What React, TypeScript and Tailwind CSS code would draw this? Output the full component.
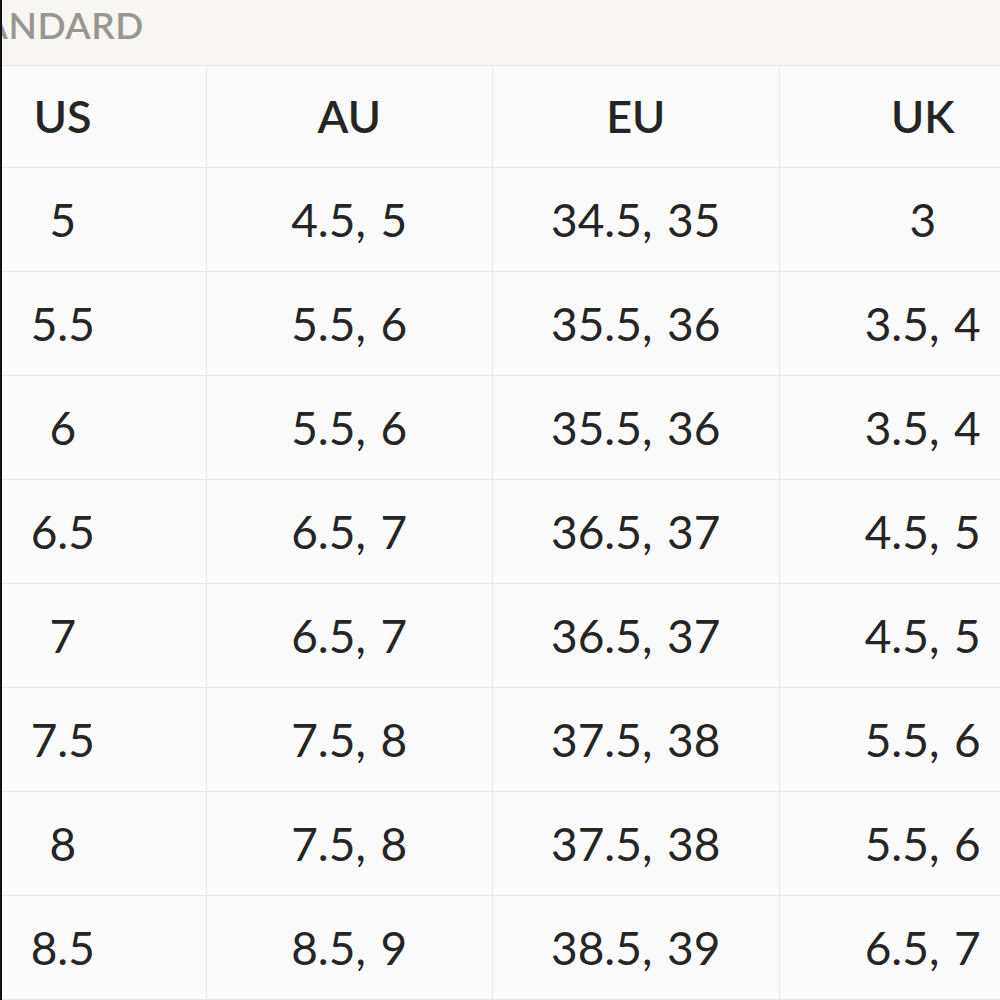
const header = ['US', 'AU', 'EU', 'UK']

const rows: string[][] = [
  ['5', '4.5, 5', '34.5, 35', '3'],
  ['5.5', '5.5, 6', '35.5, 36', '3.5, 4'],
  ['6', '5.5, 6', '35.5, 36', '3.5, 4'],
  ['6.5', '6.5, 7', '36.5, 37', '4.5, 5'],
  ['7', '6.5, 7', '36.5, 37', '4.5, 5'],
  ['7.5', '7.5, 8', '37.5, 38', '5.5, 6'],
  ['8', '7.5, 8', '37.5, 38', '5.5, 6'],
  ['8.5', '8.5, 9', '38.5, 39', '6.5, 7'],
]

export default function App() {
  return (
    <div
      className="w-[1000px] h-[1000px] overflow-hidden bg-[#fbfbfb] border-l-2 border-[#111]"
      style={{ fontFamily: 'Lato, "Liberation Sans", sans-serif' }}
    >
      {/* title band, text runs off the left edge */}
      <div className="h-[66px] bg-[#f7f6f3] border-b border-[#e9e7e4] -ml-[60px] pt-[2px]">
        <span className="text-[37px] leading-[46px] tracking-[0.5px] text-[#999690] font-semibold">
          STANDARD
        </span>
      </div>

      <div className="-ml-[82px] w-[1146px]">
        <div className="grid grid-cols-4 h-[102px] border-b border-[#e8e6e6]">
          {header.map((h, i) => (
            <div
              key={h}
              className={`flex items-center justify-center text-[45px] font-semibold text-[#252525] ${
                i < 3 ? 'border-r border-[#e8e6e6]' : ''
              }`}
            >
              {h}
            </div>
          ))}
        </div>
        {rows.map((r, ri) => (
          <div key={ri} className="grid grid-cols-4 h-[104px] border-b border-[#e8e6e6]">
            {r.map((c, ci) => (
              <div
                key={ci}
                className={`flex items-center justify-center text-[46px] text-[#252525] [word-spacing:3px] ${
                  ci < 3 ? 'border-r border-[#e8e6e6]' : ''
                }`}
              >
                {c}
              </div>
            ))}
          </div>
        ))}
      </div>
    </div>
  )
}
